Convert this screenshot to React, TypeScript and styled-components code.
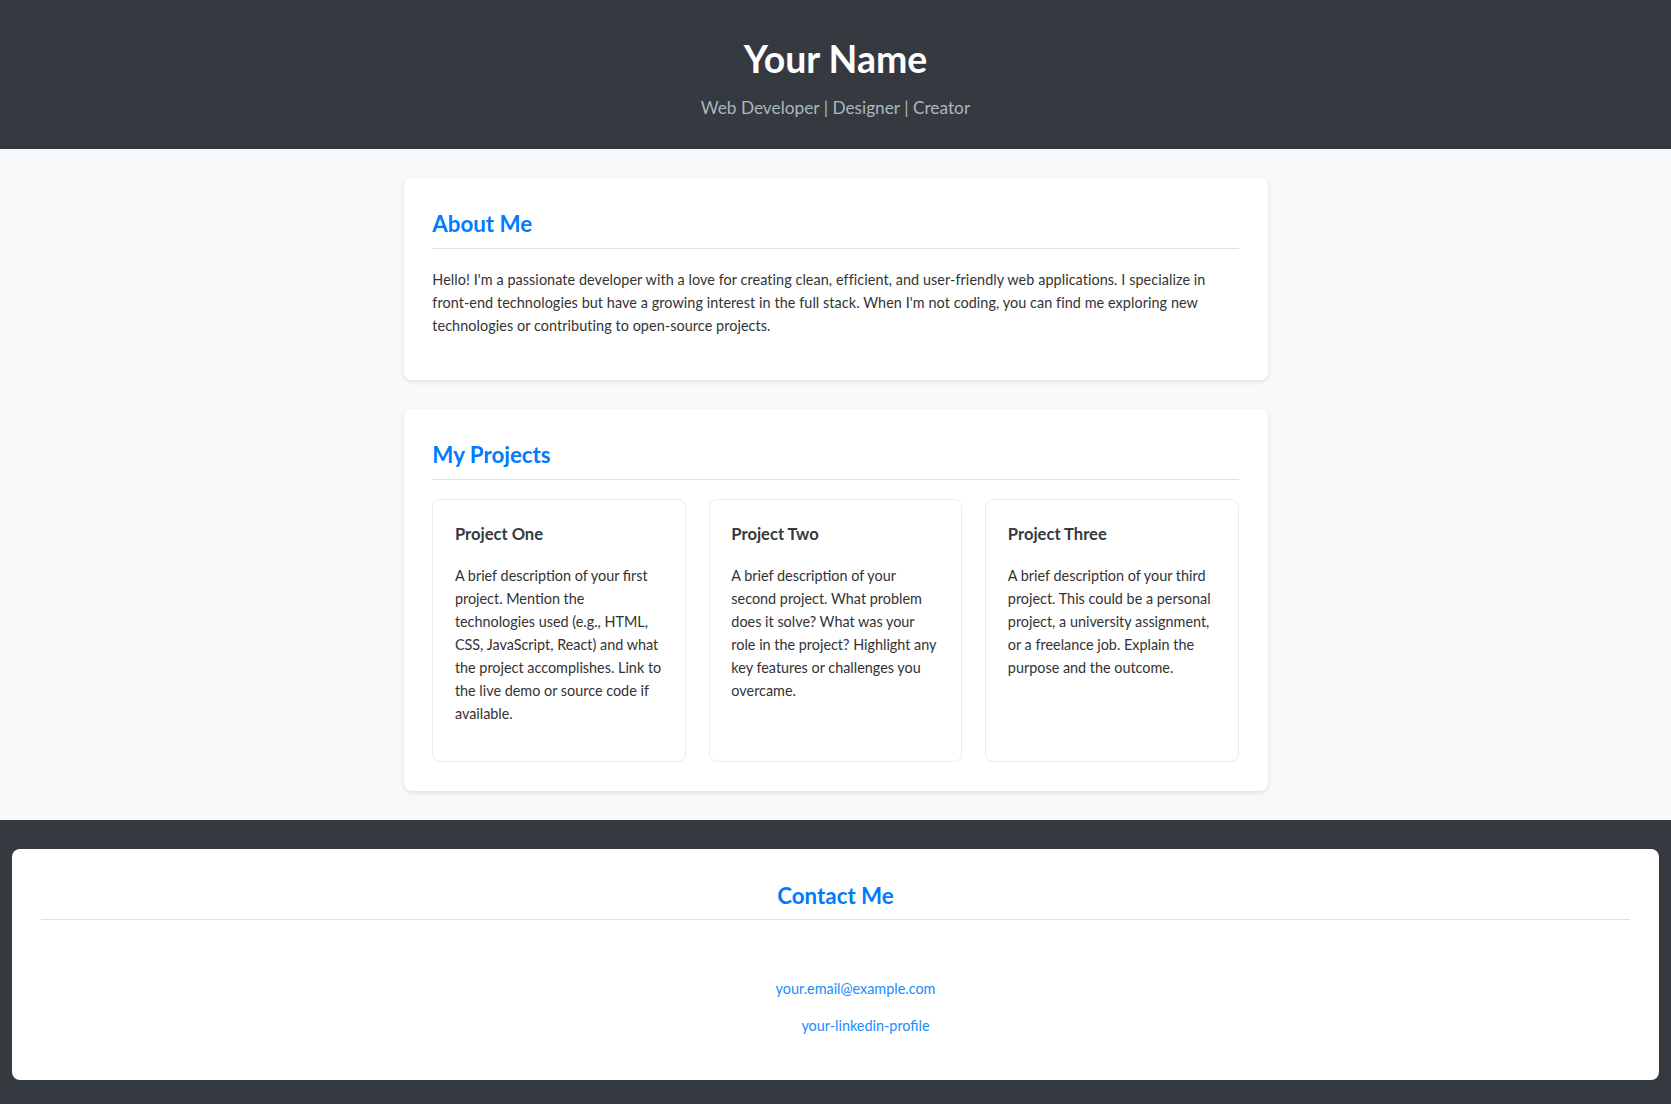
import React from "react";
import styled, { createGlobalStyle } from "styled-components";

const GlobalStyle = createGlobalStyle`
  html { font-size: 14.4px; }
  * { box-sizing: border-box; }
  body {
    margin: 0;
    font-family: "Lato", "Roboto", "Liberation Sans", sans-serif;
    font-size: 1rem;
    line-height: 1.6;
    color: #333;
    background: #f8f9fa;
  }
`;

const Header = styled.header`
  background: #343a40;
  color: #fff;
  text-align: center;
  padding: 28.8px 0 27px;
`;

const Name = styled.h1`
  margin: 0 0 5.5px;
  font-size: 2.6rem;
  font-weight: 700;
  line-height: 1.6;
`;

const Tagline = styled.p`
  margin: 0;
  font-size: 1.2rem;
  color: #adb5bd;
`;

const Main = styled.main`
  width: 864px;
  margin: 0 auto;
  padding: 2rem 0;
  display: flex;
  flex-direction: column;
  gap: 2rem;
`;

const Section = styled.section`
  background: #fff;
  border-radius: 8px;
  padding: 2rem;
  box-shadow: 0 2px 5px rgba(0, 0, 0, 0.1);
`;

const SectionTitle = styled.h2<{ $center?: boolean }>`
  margin: 0 0 18.4px;
  padding-bottom: 6px;
  border-bottom: 1px solid #dee2e6;
  font-size: 1.55rem;
  font-weight: 700;
  line-height: 1.6;
  color: #007bff;
  text-align: ${(p) => (p.$center ? "center" : "left")};
`;

const Text = styled.p<{ $tracking?: number }>`
  margin: 0 0 1rem;
  letter-spacing: ${(p) => p.$tracking ?? 0}px;
`;

const ProjectGrid = styled.div`
  display: grid;
  grid-template-columns: repeat(3, 1fr);
  gap: 1.6rem;
`;

const ProjectCard = styled.article`
  border: 1px solid #e9ecef;
  border-radius: 8px;
  padding: 1.5rem;
`;

const ProjectTitle = styled.h3`
  margin: 0 0 1em;
  font-size: 1.15rem;
  font-weight: 700;
  line-height: 1.6;
  color: #343a40;
`;

const Footer = styled.footer`
  background: #343a40;
  padding: 2rem 12px;
`;

const ContactCard = styled.div`
  background: #fff;
  border-radius: 8px;
  padding: 2rem;
  text-align: center;
`;

const ContactList = styled.ul`
  list-style: none;
  margin: 56.5px 0 0;
  padding: 0 0 0 40px;
`;

const ContactItem = styled.li`
  margin: 0 0 1rem;
  line-height: 23px;
`;

const ContactLink = styled.a<{ $indent?: number }>`
  color: #1a8cff;
  text-decoration: none;
  padding-left: ${(p) => p.$indent ?? 0}px;
`;

const projects = [
  {
    title: "Project One",
    text: "A brief description of your first project. Mention the technologies used (e.g., HTML, CSS, JavaScript, React) and what the project accomplishes. Link to the live demo or source code if available.",
  },
  {
    title: "Project Two",
    text: "A brief description of your second project. What problem does it solve? What was your role in the project? Highlight any key features or challenges you overcame.",
  },
  {
    title: "Project Three",
    text: "A brief description of your third project. This could be a personal project, a university assignment, or a freelance job. Explain the purpose and the outcome.",
  },
];

export default function App() {
  return (
    <>
      <GlobalStyle />
      <Header>
        <Name>Your Name</Name>
        <Tagline>Web Developer | Designer | Creator</Tagline>
      </Header>
      <Main>
        <Section>
          <SectionTitle>About Me</SectionTitle>
          <Text $tracking={0.07}>
            Hello! I'm a passionate developer with a love for creating clean, efficient, and
            user-friendly web applications. I specialize in front-end technologies but have a
            growing interest in the full stack. When I'm not coding, you can find me exploring new
            technologies or contributing to open-source projects.
          </Text>
        </Section>
        <Section>
          <SectionTitle>My Projects</SectionTitle>
          <ProjectGrid>
            {projects.map((p) => (
              <ProjectCard key={p.title}>
                <ProjectTitle>{p.title}</ProjectTitle>
                <Text>{p.text}</Text>
              </ProjectCard>
            ))}
          </ProjectGrid>
        </Section>
      </Main>
      <Footer>
        <ContactCard>
          <SectionTitle $center>Contact Me</SectionTitle>
          <ContactList>
            <ContactItem>
              <ContactLink href="#">your.email@example.com</ContactLink>
            </ContactItem>
            <ContactItem>
              <ContactLink href="#" $indent={20}>
                your-linkedin-profile
              </ContactLink>
            </ContactItem>
          </ContactList>
        </ContactCard>
      </Footer>
    </>
  );
}
